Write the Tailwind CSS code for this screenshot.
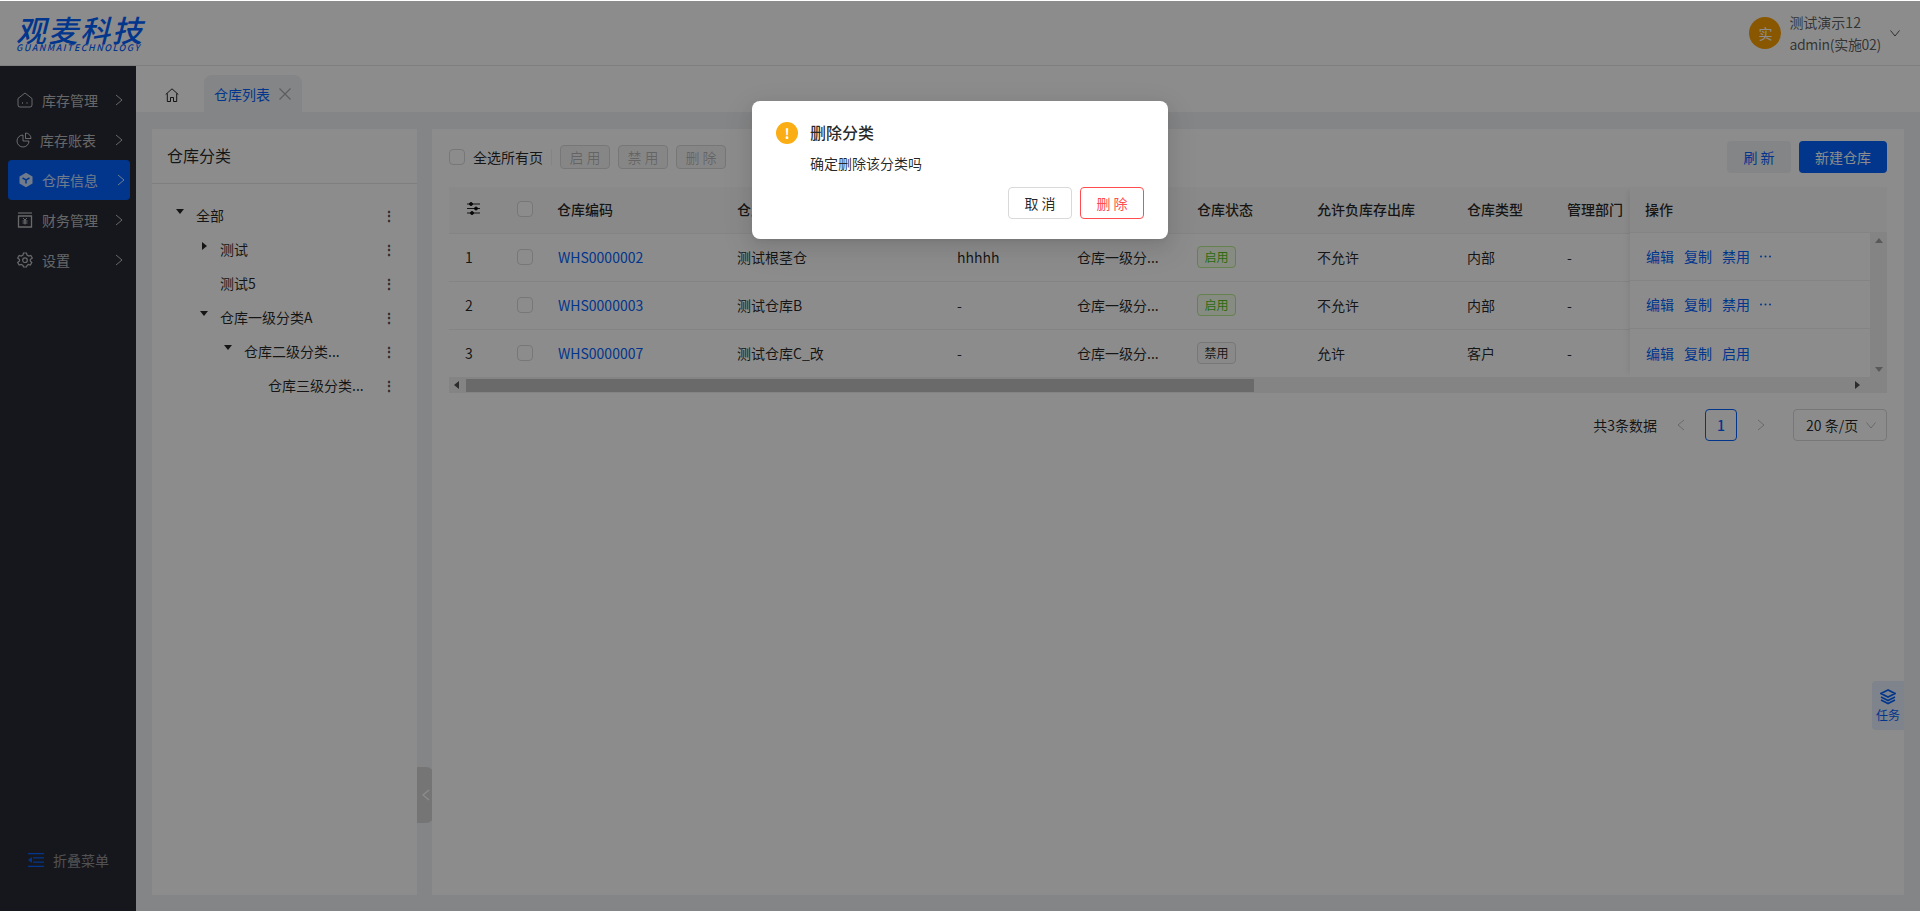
<!DOCTYPE html>
<html lang="zh-CN">
<head>
  <meta charset="UTF-8" />
  <title>仓库列表</title>
  <script src="https://cdn.jsdelivr.net/npm/@tailwindcss/browser@4"></script>
</head>
<body class="h-[911px] overflow-hidden relative bg-[#f0f2f5] text-sm text-black/85 [font-family:'Noto_Sans_CJK_SC',sans-serif]">

  <!-- 顶部 -->
  <header class="h-[66px] bg-white border-b border-[#e8e8e8] flex items-center justify-between pl-4 pr-[19px]">
    <div class="w-[128px] text-[#0363ff] italic">
      <div class="text-[30px] font-medium tracking-[2px] leading-[30px] h-[30px] whitespace-nowrap">观麦科技</div>
      <div class="text-[9px] font-medium tracking-[1.45px] leading-[8px] h-[8px] whitespace-nowrap">GUANMAITECHNOLOGY</div>
    </div>
    <div class="flex items-center">
      <div class="w-8 h-8 rounded-full bg-[#fa9f00] text-white flex items-center justify-center">实</div>
      <div class="ml-2 leading-[22px] text-black/65">
        <div>测试演示12</div>
        <div class="tracking-[-0.3px]">admin(实施02)</div>
      </div>
      <svg class="ml-2 w-3 h-3 text-black/65" viewBox="0 0 12 12" fill="none" stroke="currentColor"><path d="M1.5 3.5 6 9l4.5-5.5"/></svg>
    </div>
  </header>

  <div class="flex h-[845px]">
    <!-- 侧边栏 -->
    <aside class="w-[136px] bg-[#282a33] text-white/70 pt-[14px] flex flex-col shrink-0">
      <a class="h-10 flex items-center pl-[17px] pr-[13px]">
        <svg class="w-4 h-4 mr-[9px]" viewBox="0 0 16 16" fill="none" stroke="currentColor"><path d="M1 6.500 8 1l7 5.500V13a2 2 0 0 1-2 2H3a2 2 0 0 1-2-2z"/><path d="M5 11h1M9.500 11h1" stroke-width="1.5"/></svg>
        <span>库存管理</span>
        <svg class="ml-auto w-2 h-3" viewBox="0 0 8 12" fill="none" stroke="currentColor"><path d="m1 1 6 5-6 5"/></svg>
      </a>
      <a class="h-10 flex items-center pl-4 pr-[13px]">
        <svg class="w-4 h-4 mr-2" viewBox="0 0 16 16" fill="none" stroke="currentColor"><path d="M7 3a6 6 0 1 0 6 6H7z"/><path d="M9.500 1A5.500 5.500 0 0 1 15 6.500H9.500z"/></svg>
        <span>库存账表</span>
        <svg class="ml-auto w-2 h-3" viewBox="0 0 8 12" fill="none" stroke="currentColor"><path d="m1 1 6 5-6 5"/></svg>
      </a>
      <a class="h-10 mx-2 w-[122px] rounded bg-[#0363ff] text-white/80 flex items-center pl-[10px] pr-[5px]">
        <svg class="w-4 h-4 mr-[8px]" viewBox="0 0 16 16"><path fill="currentColor" d="M8 .8 14.500 4.400v7.200L8 15.200 1.500 11.600V4.400z"/><path fill="none" stroke="#0363ff" stroke-width="1.5" d="M4.500 6 8 8l3.500-2M8 8v3.500"/></svg>
        <span>仓库信息</span>
        <svg class="ml-auto w-2 h-3" viewBox="0 0 8 12" fill="none" stroke="currentColor"><path d="m1 1 6 5-6 5"/></svg>
      </a>
      <a class="h-10 flex items-center pl-[17px] pr-[13px]">
        <svg class="w-4 h-4 mr-[9px]" viewBox="0 0 16 16" fill="none" stroke="currentColor"><path d="M1 1h14" stroke-width="1.2"/><path d="M1.500 4h13v11h-13z" stroke-width="1.3"/><path d="m6 6 2 2 2-2M5.500 9h5M5.500 11h5M8 8v4.500"/></svg>
        <span>财务管理</span>
        <svg class="ml-auto w-2 h-3" viewBox="0 0 8 12" fill="none" stroke="currentColor"><path d="m1 1 6 5-6 5"/></svg>
      </a>
      <a class="h-10 flex items-center pl-[17px] pr-[13px]">
        <svg class="w-4 h-4 mr-[9px]" viewBox="0 0 16 16" fill="none" stroke="currentColor" stroke-width="1.2"><path d="M6.500 1h3l.5 2 1.800 1 2-.6 1.500 2.600L13.300 7.500v1.500l1.500 1.500-1.500 2.600-2-.6L10 13.500 9.500 15h-3L6 13.500l-1.800-1-2 .6L.7 10.500 2.500 9V7.500L.7 6l1.500-2.600 2 .6L6 3z"/><circle cx="8" cy="8.200" r="2.300"/></svg>
        <span>设置</span>
        <svg class="ml-auto w-2 h-3" viewBox="0 0 8 12" fill="none" stroke="currentColor"><path d="m1 1 6 5-6 5"/></svg>
      </a>
      <div class="mt-auto mb-[41px] pl-7 flex items-center text-white/50">
        <svg class="w-4 h-[14px] mr-[9px] text-[#0363ff]" viewBox="0 0 16 14"><path fill="currentColor" d="M0 0h16v1.200H0zM0 12.800h16V14H0zM5 4.200h11v1.200H5zM5 8.600h11v1.200H5zM4 4v6L0 7z"/></svg>
        <span>折叠菜单</span>
      </div>
    </aside>

    <!-- 内容 -->
    <main class="flex-1 flex flex-col min-w-0">
      <div class="h-[46px] bg-white flex items-end pl-[29px] shrink-0">
        <svg class="w-[14px] h-[14px] mb-[10px] mr-[25px] text-black/85" viewBox="0 0 14 14" fill="none" stroke="currentColor"><path d="M.7 6.500 7 .8l6.300 5.700M2.300 5.500v8h3.200v-4h3v4h3.200v-8"/></svg>
        <div class="h-[37px] w-[98px] rounded-t-lg bg-[#f0f2f5] flex items-center pl-[10px] text-[#0363ff]">
          <span>仓库列表</span>
          <svg class="ml-[9px] w-3 h-3 text-black/30" viewBox="0 0 12 12" fill="none" stroke="currentColor" stroke-width="1.2"><path d="m.5.500 11 11M11.500.500l-11 11"/></svg>
        </div>
      </div>

      <div class="flex-1 flex pt-[17px] pl-4 pr-4 pb-4 gap-[15px] min-h-0">
        <!-- 仓库分类 -->
        <section class="w-[265px] bg-white relative shrink-0">
          <h2 class="h-[55px] border-b border-[#e8e8e8] text-base flex items-center pl-[15px] pb-[2px] text-black/85">仓库分类</h2>
          <ul class="pt-[14px]">
            <li class="h-[34px] flex items-center pb-px pl-[24px] pr-[21px]">
              <span class="w-0 h-0 border-x-[4px] border-x-transparent border-t-[5px] border-t-black/85 mr-[12px] -mt-[7px]"></span><span>全部</span>
              <span class="ml-auto font-bold leading-none text-black/70">⋮</span>
            </li>
            <li class="h-[34px] flex items-center pb-px pl-[50px] pr-[21px]">
              <span class="w-0 h-0 border-y-[4px] border-y-transparent border-l-[5px] border-l-black/85 mr-[13px] -mt-[5px]"></span><span>测试</span>
              <span class="ml-auto font-bold leading-none text-black/70">⋮</span>
            </li>
            <li class="h-[34px] flex items-center pb-px pl-[68px] pr-[21px]">
              <span>测试5</span>
              <span class="ml-auto font-bold leading-none text-black/70">⋮</span>
            </li>
            <li class="h-[34px] flex items-center pb-px pl-[48px] pr-[21px]">
              <span class="w-0 h-0 border-x-[4px] border-x-transparent border-t-[5px] border-t-black/85 mr-[12px] -mt-[7px]"></span><span>仓库一级分类A</span>
              <span class="ml-auto font-bold leading-none text-black/70">⋮</span>
            </li>
            <li class="h-[34px] flex items-center pb-px pl-[72px] pr-[21px]">
              <span class="w-0 h-0 border-x-[4px] border-x-transparent border-t-[5px] border-t-black/85 mr-[12px] -mt-[7px]"></span><span>仓库二级分类...</span>
              <span class="ml-auto font-bold leading-none text-black/70">⋮</span>
            </li>
            <li class="h-[34px] flex items-center pb-px pl-[116px] pr-[21px]">
              <span>仓库三级分类...</span>
              <span class="ml-auto font-bold leading-none text-black/70">⋮</span>
            </li>
          </ul>
          <!-- 收起把手 -->
          <button class="absolute left-full top-[638px] w-[17px] h-14 rounded-r-lg bg-[#d5d5d5] flex items-center justify-center text-white">
            <svg class="w-2 h-3" viewBox="0 0 8 12" fill="none" stroke="currentColor" stroke-width="1.3"><path d="M7 1 1 6l6 5"/></svg>
          </button>
        </section>

        <!-- 仓库列表 -->
        <section class="flex-1 bg-white relative min-w-0 pl-[17px] pr-[17px]">
          <div class="h-[58px] flex items-center pb-[2px]">
            <span class="w-4 h-4 rounded border border-[#d9d9d9] bg-white"></span>
            <span class="ml-2">全选所有页</span>
            <span class="ml-2 w-px h-4 bg-[#f0f0f0]"></span>
            <button class="ml-2 w-[50px] h-6 rounded border border-[#d9d9d9] bg-[#f5f5f5] text-black/25">启 用</button>
            <button class="ml-2 w-[50px] h-6 rounded border border-[#d9d9d9] bg-[#f5f5f5] text-black/25">禁 用</button>
            <button class="ml-2 w-[50px] h-6 rounded border border-[#d9d9d9] bg-[#f5f5f5] text-black/25">删 除</button>
            <button class="ml-auto w-16 h-8 rounded bg-[#f0f2f5] text-[#0363ff]">刷 新</button>
            <button class="ml-2 w-[88px] h-8 rounded bg-[#0363ff] text-white">新建仓库</button>
          </div>

          <div class="flex">
            <table class="table-fixed w-[1181px] shrink-0 border-collapse [&_td]:pb-px">
              <colgroup>
                <col class="w-[60px]"><col class="w-[32px]"><col class="w-[180px]"><col class="w-[220px]"><col class="w-[120px]"><col class="w-[120px]"><col class="w-[120px]"><col class="w-[150px]"><col class="w-[100px]"><col class="w-[79px]">
              </colgroup>
              <thead class="bg-[#fafafa]">
                <tr class="h-[46px] border-b border-[#f0f0f0] [&>th]:pb-[2px]">
                  <th class="pl-[18px] text-left"><svg class="w-[13px] h-[13px]" viewBox="0 0 13 13" fill="none" stroke="currentColor"><path d="M0 2h13M0 6.500h13M0 11h13"/><circle cx="4" cy="2" r="1.500" fill="currentColor"/><circle cx="9" cy="6.500" r="1.500" fill="currentColor"/><circle cx="5" cy="11" r="1.500" fill="currentColor"/></svg></th>
                  <th class="text-left pl-2"><span class="block w-4 h-4 rounded border border-[#d9d9d9] bg-white"></span></th>
                  <th class="text-left font-medium pl-4">仓库编码</th>
                  <th class="text-left font-medium pl-4">仓库名称</th>
                  <th class="text-left font-medium pl-4">仓库地址</th>
                  <th class="text-left font-medium pl-4">仓库分类</th>
                  <th class="text-left font-medium pl-4">仓库状态</th>
                  <th class="text-left font-medium pl-4">允许负库存出库</th>
                  <th class="text-left font-medium pl-4">仓库类型</th>
                  <th class="text-left font-medium pl-4 whitespace-nowrap">管理部门</th>
                </tr>
              </thead>
              <tbody>
                <tr class="h-[48px] border-b border-[#f0f0f0]">
                  <td class="pl-4">1</td>
                  <td class="pl-2"><span class="block w-4 h-4 rounded border border-[#d9d9d9] bg-white"></span></td>
                  <td class="pl-[17px] text-[#0363ff]">WHS0000002</td>
                  <td class="pl-4">测试根茎仓</td>
                  <td class="pl-4">hhhhh</td>
                  <td class="pl-4">仓库一级分...</td>
                  <td class="pl-4"><span class="inline-flex items-center justify-center w-[39px] h-[22px] text-xs rounded border border-[#b7eb8f] bg-[#f6ffed] text-[#52c41a]">启用</span></td>
                  <td class="pl-4">不允许</td>
                  <td class="pl-4">内部</td>
                  <td class="pl-4">-</td>
                </tr>
                <tr class="h-[48px] border-b border-[#f0f0f0]">
                  <td class="pl-4">2</td>
                  <td class="pl-2"><span class="block w-4 h-4 rounded border border-[#d9d9d9] bg-white"></span></td>
                  <td class="pl-[17px] text-[#0363ff]">WHS0000003</td>
                  <td class="pl-4">测试仓库B</td>
                  <td class="pl-4">-</td>
                  <td class="pl-4">仓库一级分...</td>
                  <td class="pl-4"><span class="inline-flex items-center justify-center w-[39px] h-[22px] text-xs rounded border border-[#b7eb8f] bg-[#f6ffed] text-[#52c41a]">启用</span></td>
                  <td class="pl-4">不允许</td>
                  <td class="pl-4">内部</td>
                  <td class="pl-4">-</td>
                </tr>
                <tr class="h-[48px]">
                  <td class="pl-4">3</td>
                  <td class="pl-2"><span class="block w-4 h-4 rounded border border-[#d9d9d9] bg-white"></span></td>
                  <td class="pl-[17px] text-[#0363ff]">WHS0000007</td>
                  <td class="pl-4">测试仓库C_改</td>
                  <td class="pl-4">-</td>
                  <td class="pl-4">仓库一级分...</td>
                  <td class="pl-4"><span class="inline-flex items-center justify-center w-[39px] h-[22px] text-xs rounded border border-[#d9d9d9] bg-[#fafafa] text-black/85">禁用</span></td>
                  <td class="pl-4">允许</td>
                  <td class="pl-4">客户</td>
                  <td class="pl-4">-</td>
                </tr>
              </tbody>
            </table>

            <!-- 操作列 -->
            <div class="w-[257px] shrink-0 shadow-[-6px_0_6px_-4px_rgba(0,0,0,0.08)]">
              <div class="h-[46px] bg-[#fafafa] border-b border-[#f0f0f0] font-medium flex items-center pl-[15px] pb-[2px]">操作</div>
              <div class="flex">
                <div class="w-[240px] text-[#0363ff]">
                  <div class="h-[48px] border-b border-[#f0f0f0] flex items-center pl-4 pb-px gap-[10px]"><span>编辑</span><span>复制</span><span>禁用</span><svg class="w-[11px] h-[3px]" viewBox="0 0 11 3" fill="currentColor"><circle cx="1" cy="1.500" r="1"/><circle cx="5.500" cy="1.500" r="1"/><circle cx="10" cy="1.500" r="1"/></svg></div>
                  <div class="h-[48px] border-b border-[#f0f0f0] flex items-center pl-4 pb-px gap-[10px]"><span>编辑</span><span>复制</span><span>禁用</span><svg class="w-[11px] h-[3px]" viewBox="0 0 11 3" fill="currentColor"><circle cx="1" cy="1.500" r="1"/><circle cx="5.500" cy="1.500" r="1"/><circle cx="10" cy="1.500" r="1"/></svg></div>
                  <div class="h-[48px] flex items-center pl-4 pb-px gap-[10px]"><span>编辑</span><span>复制</span><span>启用</span></div>
                </div>
                <div class="w-[17px] bg-[#f1f1f1] flex flex-col items-center justify-between py-[5px]">
                  <span class="w-0 h-0 border-x-[4px] border-x-transparent border-b-[5px] border-b-[#a3a3a3]"></span>
                  <span class="w-0 h-0 border-x-[4px] border-x-transparent border-t-[5px] border-t-[#a3a3a3]"></span>
                </div>
              </div>
            </div>
          </div>

          <!-- 横向滚动条 -->
          <div class="h-4 bg-[#f1f1f1] flex items-center">
            <span class="w-0 h-0 ml-[5px] border-y-[4px] border-y-transparent border-r-[5px] border-r-[#505050]"></span>
            <span class="ml-[7px] w-[788px] h-[13px] bg-[#c1c1c1]"></span>
            <span class="w-0 h-0 ml-[601px] border-y-[4px] border-y-transparent border-l-[5px] border-l-[#505050]"></span>
          </div>

          <!-- 分页 -->
          <div class="flex items-center justify-end mt-4 h-8">
            <span class="pb-px">共3条数据</span>
            <svg class="ml-5 w-2 h-3 text-black/25" viewBox="0 0 8 12" fill="none" stroke="currentColor"><path d="M7 1 1 6l6 5"/></svg>
            <span class="ml-5 w-8 h-8 rounded border border-[#0363ff] text-[#0363ff] font-medium flex items-center justify-center">1</span>
            <svg class="ml-5 w-2 h-3 text-black/25" viewBox="0 0 8 12" fill="none" stroke="currentColor"><path d="m1 1 6 5-6 5"/></svg>
            <div class="ml-7 w-[94px] h-8 rounded border border-[#d9d9d9] flex items-center pl-3 text-black/85">
              <span>20 条/页</span>
              <svg class="ml-[7px] w-3 h-3 text-black/25" viewBox="0 0 12 12" fill="none" stroke="currentColor"><path d="M1.500 3.500 6 9l4.500-5.500"/></svg>
            </div>
          </div>

          <!-- 任务 -->
          <div class="absolute right-0 top-[552px] w-8 h-[49px] rounded-l bg-[#e6efff] text-[#0363ff] text-xs flex flex-col items-center justify-center pt-px">
            <svg class="w-4 h-4" viewBox="0 0 16 16" fill="none" stroke="currentColor" stroke-width="1.6"><path d="M8 1 1 4.500 8 8l7-3.500zM1 8l7 3.500L15 8M1 11l7 3.500 7-3.500"/></svg>
            <span class="mt-[2px]">任务</span>
          </div>
        </section>
      </div>
    </main>
  </div>

  <!-- 遮罩 -->
  <div class="absolute inset-x-0 bottom-0 top-px bg-black/45"></div>

  <!-- 删除确认 -->
  <div class="absolute left-[752px] top-[101px] w-[416px] h-[138px] bg-white rounded-lg shadow-[0_3px_6px_-4px_rgba(0,0,0,0.12),0_6px_16px_0_rgba(0,0,0,0.08),0_9px_28px_8px_rgba(0,0,0,0.05)] pt-[21px] px-6">
    <div class="flex items-center h-[22px]">
      <span class="w-[22px] h-[22px] rounded-full bg-[#faad14] text-white font-bold flex items-center justify-center leading-none">!</span>
      <span class="ml-3 -mt-[2px] text-base font-medium leading-[22px]">删除分类</span>
    </div>
    <p class="ml-[34px] mt-2 leading-[22px] text-black/85">确定删除该分类吗</p>
    <div class="flex justify-end gap-2 mt-[13px]">
      <button class="w-16 h-8 rounded border border-[#d9d9d9] bg-white">取 消</button>
      <button class="w-16 h-8 rounded border border-[#ff4d4f] bg-white text-[#ff4d4f]">删 除</button>
    </div>
  </div>
</body>
</html>
